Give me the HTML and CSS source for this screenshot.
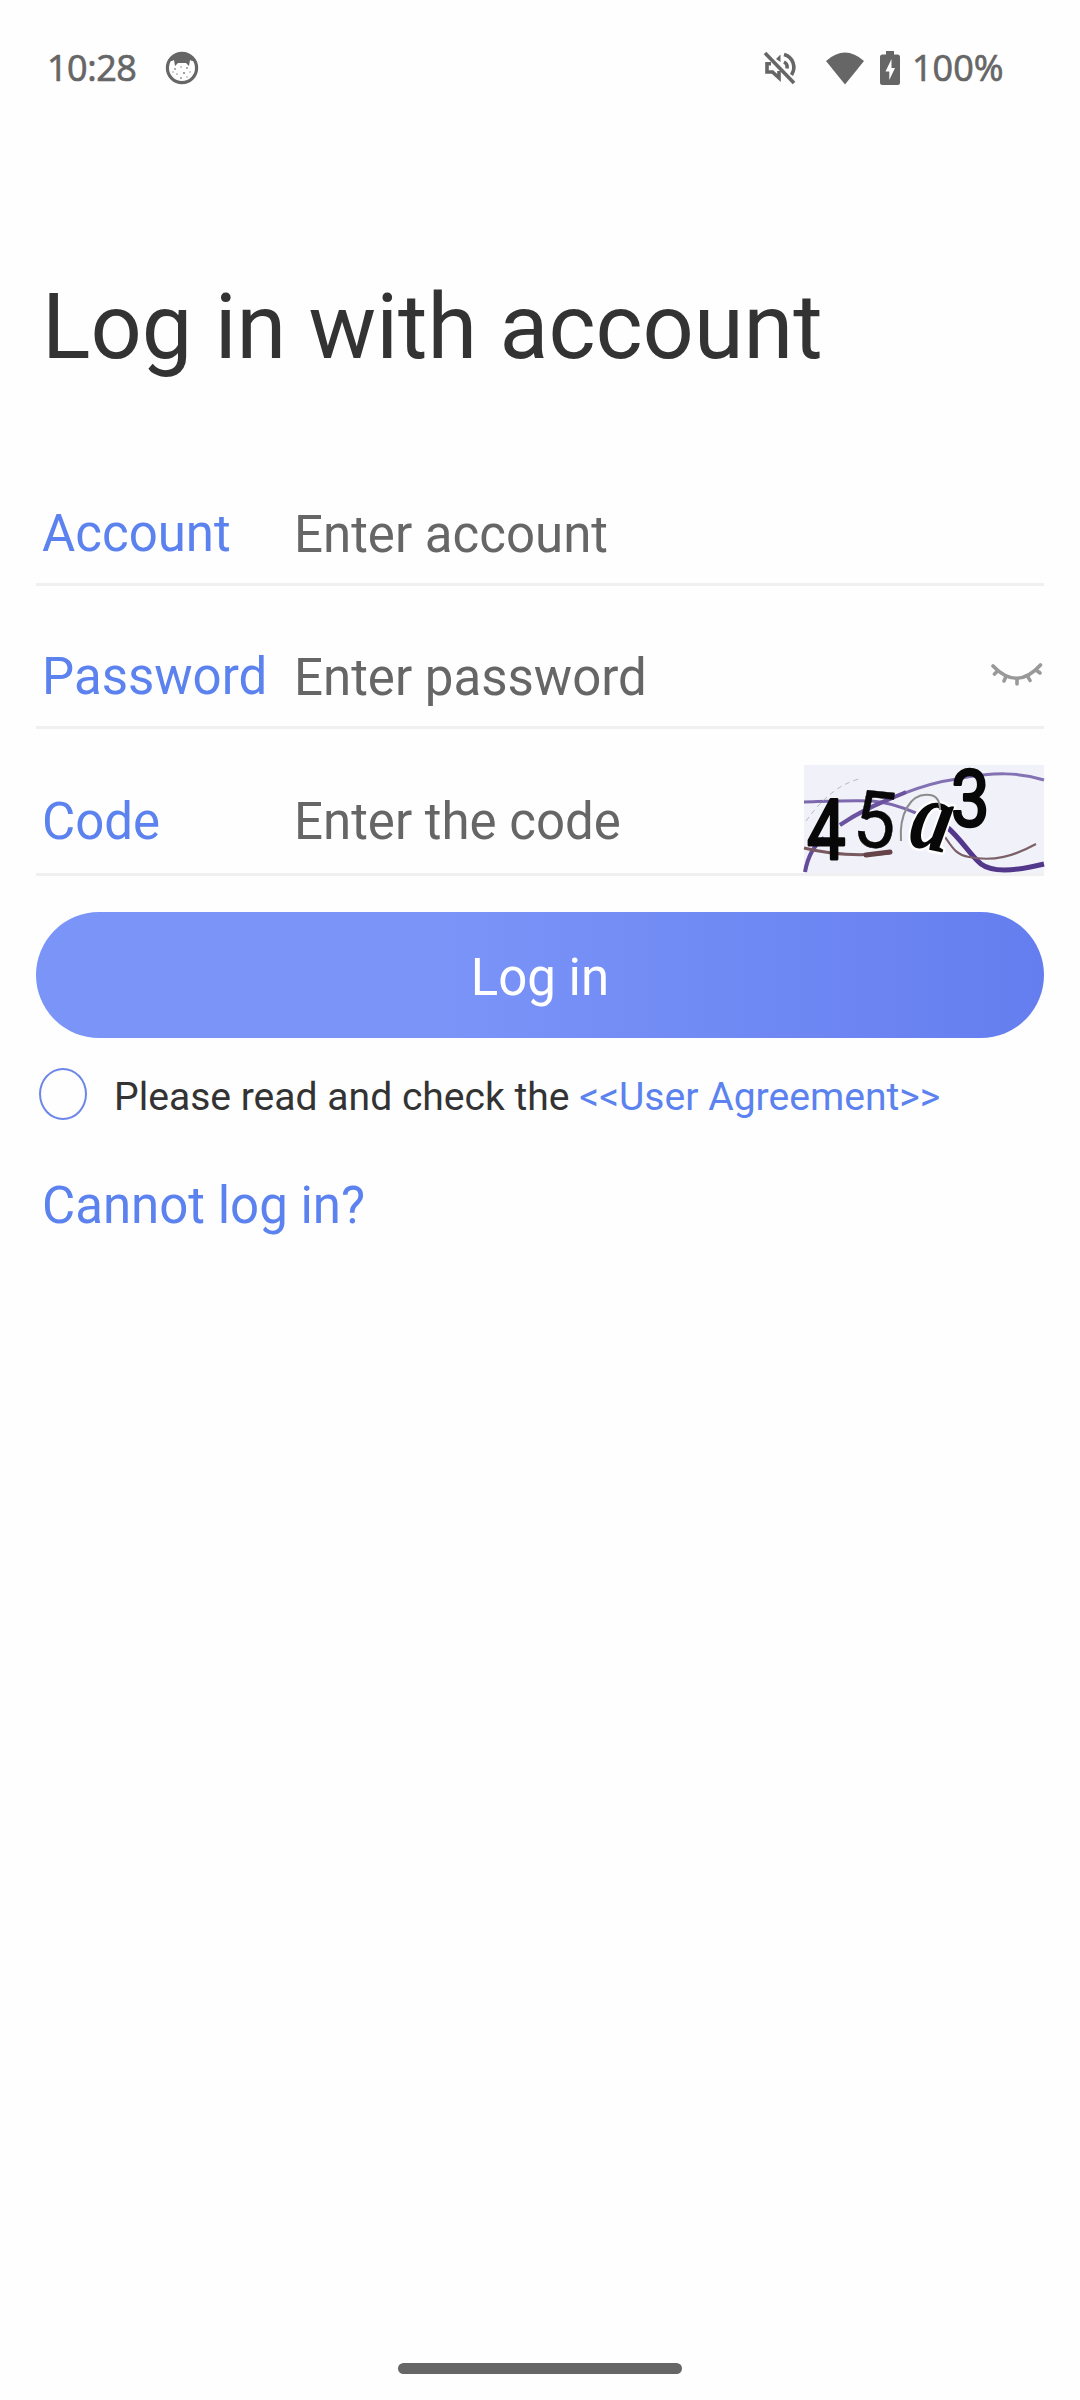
FILE: index.html
```html
<!DOCTYPE html>
<html lang="en">
<head>
  <meta charset="UTF-8">
  <meta name="viewport" content="width=device-width, initial-scale=1.0">
  <title>Log in with account</title>
  <link rel="stylesheet" href="styles.css">
</head>
<body>
  <header class="status-bar">
    <div class="status-left">
      <span class="status-time">10:28</span>
      <svg class="status-app" viewBox="0 0 34 34">
        <circle cx="17" cy="17" r="14.6" fill="none" stroke="#666" stroke-width="3.2"/>
        <path d="M5 10 Q9 2 17 2 T29 10 L27 10 L25 9 L24 15 L21 12 H13 L10 15 L9 9 L7 10 Z" fill="#666"/>
        <g fill="#888">
          <circle cx="10" cy="18" r=".9"/><circle cx="16" cy="16" r=".8"/><circle cx="22" cy="17" r=".9"/>
          <circle cx="12" cy="23" r=".8"/><circle cx="19" cy="22" r="1.1"/><circle cx="25" cy="21" r=".7"/>
          <circle cx="16" cy="27" r=".9"/><circle cx="22" cy="26" r=".7"/><circle cx="8" cy="21" r=".7"/>
        </g>
      </svg>
    </div>
    <div class="status-right">
      <svg class="icon-mute" viewBox="0 0 34 34" fill="none" stroke="#666" stroke-width="3.6">
        <path d="M2 2 L31 32"/>
        <path d="M8 12.8 H4 V21 H9.5 L16 27 V20"/>
        <path d="M13 8 L17.5 3.5 V11 Z" fill="#666" stroke="none"/>
        <path d="M21 3.5 C30 6 33.5 16 28.5 24"/>
        <path d="M21 11 C24 12.5 24.5 15 24 17.5"/>
      </svg>
      <svg class="icon-wifi" viewBox="0 0 40 33">
        <path d="M1 9 Q20 -8 39 9 L20 32.500 Z" fill="#666"/>
      </svg>
      <svg class="icon-battery" viewBox="0 0 20 34">
        <path d="M6 0 H14 V3.500 H17.500 Q20 3.500 20 6 V31.500 Q20 34 17.500 34 H2.500 Q0 34 0 31.500 V6 Q0 3.500 2.500 3.500 H6 Z" fill="#666"/>
        <path d="M11.500 8 L5.500 20.500 H9.300 V29 L15 17 H11.500 Z" fill="#fefefe"/>
      </svg>
      <span class="status-percent">100%</span>
    </div>
  </header>

  <main class="login">
    <h1>Log in with account</h1>

    <form class="login-form">
      <div class="field">
        <label class="field-label" for="account">Account</label>
        <input class="field-input" id="account" type="text" placeholder="Enter account">
      </div>

      <div class="field">
        <label class="field-label" for="password">Password</label>
        <input class="field-input" id="password" type="password" placeholder="Enter password">
        <svg class="icon-eye" viewBox="0 0 54 28" fill="none" stroke="#999" stroke-width="3.6" stroke-linecap="round">
          <path d="M3 6 Q27 31 50.500 5"/>
          <path d="M7.500 11 L4.500 14 M16 16.500 L14 21 M27 19 V24 M37.500 16 L40 20.500 M46 10 L50 13"/>
        </svg>
      </div>

      <div class="field field-code">
        <label class="field-label" for="code">Code</label>
        <input class="field-input" id="code" type="text" placeholder="Enter the code">
        <svg class="captcha" viewBox="0 0 240 108">
          <rect width="240" height="108" fill="#f1f2f9"/>
          <g fill="none">
            <path d="M0 37 C30 36 50 35 68 36 C85 37 100 43 112 48" stroke="#7d68ad" stroke-width="3"/>
            <path d="M36 60 C75 37 115 19 153 14 C190 7 215 7 240 15" stroke="#8371b3" stroke-width="3"/>
            <path d="M1 107 C4 90 10 80 20 73" stroke="#654c9b" stroke-width="4"/>
            <path d="M36 60 C62 42 77 38 102 27" stroke="#6b539f" stroke-width="4"/>
            <path d="M143 62 C158 75 166 90 177 99 C190 109 220 104 240 99" stroke="#52378b" stroke-width="5"/>
            <path d="M0 83 C20 88 50 92 86 88" stroke="#77595f" stroke-width="3"/>
            <path d="M62 90 L86 87" stroke="#654348" stroke-width="5" stroke-linecap="round"/>
            <path d="M141 72 C148 82 152 90 165 92 C190 97 210 91 232 79" stroke="#7c6068" stroke-width="2.2"/>
            <path d="M2 56 C15 38 32 20 55 14" stroke="#b9b9c0" stroke-width="1" stroke-dasharray="5 4"/>
          </g>
          <text class="captcha-char" transform="translate(3 94) scale(.78 .95)">4</text>
          <text class="captcha-char captcha-thin" transform="translate(47 80) rotate(6) scale(.86 .9)">5</text>
          <text class="captcha-char captcha-script" transform="translate(103 80) rotate(12) scale(.68 .86)">a</text>
          <path d="M97 76 C95 50 106 27 126 30 C133 31 136 37 136 45" fill="none" stroke="#8c8c8c" stroke-width="2"/>
          <text class="captcha-char" transform="translate(147 61) scale(.78 .9)">3</text>
        </svg>
      </div>

      <button class="login-btn" type="button">Log in</button>

      <div class="agreement">
        <span class="agreement-check"></span>
        <span class="agreement-text">Please read and check the <a class="link">&lt;&lt;User Agreement&gt;&gt;</a></span>
      </div>

      <a class="link help-link">Cannot log in?</a>
    </form>
  </main>

  <div class="home-indicator"></div>
</body>
</html>
```
FILE: styles.css
```css
* {
  margin: 0;
  padding: 0;
  box-sizing: border-box;
}

body {
  font-family: Roboto, sans-serif;
  background: #fefefe;
  color: #333;
  height: 2400px;
  display: flex;
  flex-direction: column;
  overflow: hidden;
}

svg {
  display: block;
  flex-shrink: 0;
  overflow: visible;
}

/* Status bar */
.status-bar {
  height: 136px;
  padding: 0 75px 0 47px;
  display: flex;
  align-items: center;
  justify-content: space-between;
  font-family: 'Open Sans', sans-serif;
  font-weight: 500;
  font-size: 36px;
  line-height: 48px;
  color: #666;
  -webkit-text-stroke: 0.7px #666;
}

.status-left,
.status-right {
  display: flex;
  align-items: center;
}

.status-time {
  width: 118px;
  letter-spacing: -0.5px;
}

.status-app {
  width: 34px;
  height: 34px;
}

.icon-mute {
  width: 34px;
  height: 34px;
  margin-right: 28px;
}

.icon-wifi {
  width: 40px;
  height: 33px;
  margin-right: 15px;
}

.icon-battery {
  width: 20px;
  height: 34px;
  margin-right: 12px;
}

.status-percent {
  width: 93px;
  white-space: nowrap;
}

/* Login */
.login {
  flex: 1;
  padding: 139px 36px 0;
}

h1 {
  font-size: 90px;
  font-weight: 400;
  line-height: 106px;
  padding-left: 6px;
  margin-bottom: 62px;
}

.login-form {
  display: flex;
  flex-direction: column;
}

.field {
  height: 143px;
  padding-top: 42px;
  border-bottom: 3px solid #f0f0f0;
  display: flex;
  align-items: center;
  font-size: 51px;
}

.field-code {
  height: 147px;
  padding-top: 36px;
}

.field-label {
  width: 252px;
  padding-left: 6px;
  line-height: 60px;
  color: #5b82ee;
}

.field-input {
  flex: 1;
  min-width: 0;
  height: 60px;
  padding-left: 6px;
  border: none;
  outline: none;
  background: none;
  font: inherit;
  color: #333;
}

.field-input::placeholder {
  color: #666;
}

.field-code .field-label,
.field-code .field-input {
  margin-top: 5px;
}

.icon-eye {
  width: 54px;
  height: 28px;
  margin-bottom: 6px;
}

.captcha {
  width: 240px;
  height: 108px;
}

.captcha-char {
  font-family: Roboto, sans-serif;
  font-size: 88px;
  fill: #080808;
  stroke: #080808;
  stroke-width: 3px;
  stroke-linejoin: round;
}

.captcha-thin {
  stroke-width: 0.5px;
}

.captcha-script {
  font-family: 'Liberation Serif', serif;
  font-style: italic;
  font-weight: 700;
  font-size: 118px;
  stroke: #fff;
  stroke-width: 6px;
  paint-order: stroke;
}

.login-btn {
  height: 126px;
  margin-top: 36px;
  padding-top: 4px;
  border: none;
  border-radius: 63px;
  background: linear-gradient(90deg, #7a94f8 0%, #7a94f8 40%, #657eef 100%);
  color: #fff;
  font-family: inherit;
  font-size: 51px;
}

.agreement {
  display: flex;
  align-items: center;
  height: 52px;
  margin-top: 30px;
  padding-left: 3px;
  font-size: 39.1px;
  line-height: 52px;
}

.agreement-check {
  width: 48px;
  height: 52px;
  border: 2px solid #6c86e8;
  border-radius: 50%;
  margin-right: 27px;
}

.agreement-text {
  padding-top: 6px;
}

.link {
  color: #5b82ee;
}

.help-link {
  margin-top: 56px;
  padding-left: 6px;
  font-size: 51px;
  line-height: 60px;
}

.home-indicator {
  width: 284px;
  height: 11px;
  margin: 0 auto 26px;
  border-radius: 6px;
  background: #666;
}
```
